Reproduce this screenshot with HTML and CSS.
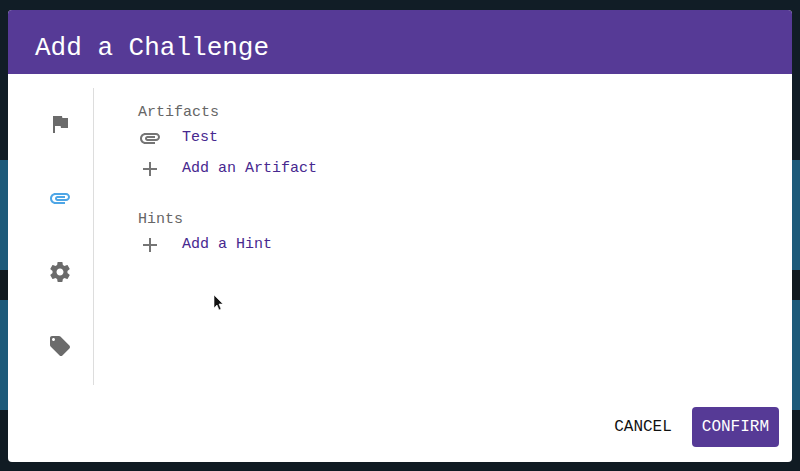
FILE: index.html
```html
<!DOCTYPE html>
<html lang="en">
<head>
  <meta charset="UTF-8">
  <title>Add a Challenge</title>
  <link rel="stylesheet" href="styles.css">
</head>
<body>
  <div class="backdrop">
    <div class="band band-top"></div>
    <div class="band band-teal"></div>
    <div class="band band-dark"></div>
    <div class="band band-teal"></div>
    <div class="band band-bottom"></div>
  </div>

  <div class="dialog">
    <div class="dialog-title">Add a Challenge</div>

    <div class="dialog-body">
      <div class="tabs">
        <svg class="tab" viewBox="0 0 24 24"><path d="M14.4 6L14 4H5v17h2v-7h5.6l.4 2h7V6z"/></svg>
        <svg class="tab active" viewBox="0 0 24 24"><path d="M2 12.5C2 9.46 4.46 7 7.5 7H18c2.21 0 4 1.79 4 4s-1.79 4-4 4H9.5C8.12 15 7 13.88 7 12.5S8.12 10 9.5 10H17v2H9.41c-.55 0-.55 1 0 1H18c1.1 0 2-.9 2-2s-.9-2-2-2H7.5C5.57 9 4 10.57 4 12.5S5.57 16 7.5 16H17v2H7.5C4.46 18 2 15.54 2 12.5z"/></svg>
        <svg class="tab" viewBox="0 0 24 24"><path d="M19.43 12.98c.04-.32.07-.64.07-.98s-.03-.66-.07-.98l2.11-1.65c.19-.15.24-.42.12-.64l-2-3.46c-.12-.22-.39-.3-.61-.22l-2.49 1c-.52-.4-1.08-.73-1.69-.98l-.38-2.65C14.46 2.18 14.25 2 14 2h-4c-.25 0-.46.18-.49.42l-.38 2.65c-.61.25-1.17.59-1.69.98l-2.49-1c-.23-.09-.49 0-.61.22l-2 3.46c-.13.22-.07.49.12.64l2.11 1.65c-.04.32-.07.65-.07.98s.03.66.07.98l-2.11 1.65c-.19.15-.24.42-.12.64l2 3.46c.12.22.39.3.61.22l2.49-1c.52.4 1.08.73 1.69.98l.38 2.65c.03.24.24.42.49.42h4c.25 0 .46-.18.49-.42l.38-2.65c.61-.25 1.17-.59 1.69-.98l2.49 1c.23.09.49 0 .61-.22l2-3.46c.12-.22.07-.49-.12-.64l-2.11-1.65zM12 15.5c-1.93 0-3.5-1.57-3.5-3.5s1.57-3.5 3.5-3.5 3.5 1.57 3.5 3.5-1.57 3.5-3.5 3.5z"/></svg>
        <svg class="tab" viewBox="0 0 24 24"><path d="M21.41 11.58l-9-9C12.05 2.22 11.55 2 11 2H4c-1.1 0-2 .9-2 2v7c0 .55.22 1.05.59 1.42l9 9c.36.36.86.58 1.41.58.55 0 1.05-.22 1.41-.59l7-7c.37-.36.59-.86.59-1.41 0-.55-.23-1.06-.59-1.42zM5.5 7C4.67 7 4 6.33 4 5.5S4.67 4 5.5 4 7 4.67 7 5.5 6.33 7 5.5 7z"/></svg>
      </div>

      <div class="content">
        <div class="section">
          <div class="section-label">Artifacts</div>
          <div class="row">
            <svg class="row-icon" viewBox="0 0 24 24"><path d="M2 12.5C2 9.46 4.46 7 7.5 7H18c2.21 0 4 1.79 4 4s-1.79 4-4 4H9.5C8.12 15 7 13.88 7 12.5S8.12 10 9.5 10H17v2H9.41c-.55 0-.55 1 0 1H18c1.1 0 2-.9 2-2s-.9-2-2-2H7.5C5.57 9 4 10.57 4 12.5S5.57 16 7.5 16H17v2H7.5C4.46 18 2 15.54 2 12.5z"/></svg>
            <span class="row-text">Test</span>
          </div>
          <div class="row">
            <svg class="row-icon" viewBox="0 0 24 24"><path d="M19 13h-6v6h-2v-6H5v-2h6V5h2v6h6v2z"/></svg>
            <span class="row-text">Add an Artifact</span>
          </div>
        </div>
        <div class="section">
          <div class="section-label">Hints</div>
          <div class="row">
            <svg class="row-icon" viewBox="0 0 24 24"><path d="M19 13h-6v6h-2v-6H5v-2h6V5h2v6h6v2z"/></svg>
            <span class="row-text">Add a Hint</span>
          </div>
        </div>
      </div>
    </div>

    <div class="dialog-actions">
      <button class="btn">CANCEL</button>
      <button class="btn btn-primary">CONFIRM</button>
    </div>

    <svg class="cursor" viewBox="0 0 12 18"><path d="M1 1v13l3-3 2 5 2-1-2-5h4z"/></svg>
  </div>
</body>
</html>
```

FILE: styles.css
```css
*{margin: 0; padding: 0; box-sizing: border-box;}

html, body{
  width: 800px;
  height: 471px;
  overflow: hidden;
}

body{
  position: relative;
  background-color: #101c24;
  font-family: "Liberation Mono", monospace;
}

.backdrop{
  position: absolute;
  inset: 0;
  display: flex;
  flex-direction: column;
}

.band-top{height: 160px; background-color: #111d26;}
.band-teal{height: 110px; background-color: #1d5a7a;}
.band-dark{height: 30px; background-color: #111a20;}
.band-bottom{flex: 1; background-color: #101b23;}

.dialog{
  position: absolute;
  left: 8px;
  top: 10px;
  width: 784px;
  height: 452px;
  background-color: #fff;
  border-radius: 4px;
  overflow: hidden;
  display: flex;
  flex-direction: column;
}

.dialog-title{
  height: 64px;
  padding-left: 27px;
  background-color: #563a96;
  color: #fff;
  font-size: 26px;
  line-height: 76px;
}

.dialog-body{
  height: 311px;
  padding-top: 14px;
  display: flex;
}

.tabs{
  width: 86px;
  height: 297px;
  border-right: 1px solid #ddd;
  padding: 24px 0 0 40px;
  display: flex;
  flex-direction: column;
  gap: 50px;
}

.tab{
  width: 24px;
  height: 24px;
  fill: #6b6b6b;
}

.tab.active{fill: #4ea6e6;}

.content{
  padding: 16px 0 0 44px;
  font-size: 15px;
}

.section{margin-bottom: 27px;}

.section-label{
  color: #666;
  line-height: 18px;
}

.row{
  height: 31px;
  display: flex;
  align-items: center;
  gap: 20px;
}

.row-icon{
  width: 24px;
  height: 24px;
  fill: #757575;
}

.row-text{color: #47288f;}

.dialog-actions{
  flex: 1;
  display: flex;
  justify-content: flex-end;
  align-items: flex-start;
  padding: 22px 13px 0 0;
  gap: 10px;
}

.btn{
  height: 40px;
  padding: 0 10px;
  border: 0;
  border-radius: 4px;
  background: none;
  font-family: inherit;
  font-size: 16px;
  color: #111;
}

.btn-primary{
  background-color: #563a96;
  color: #fff;
}

.cursor{
  position: absolute;
  left: 205px;
  top: 284px;
  width: 12px;
  height: 18px;
  fill: #111;
  stroke: #fff;
  stroke-width: 0.6;
}
```
